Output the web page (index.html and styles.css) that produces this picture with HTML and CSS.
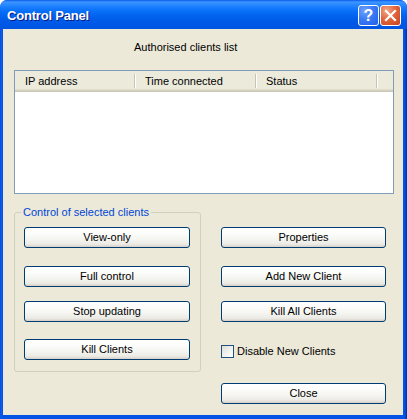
FILE: index.html
```html
<!DOCTYPE html>
<html>
<head>
<meta charset="utf-8">
<link rel="stylesheet" href="styles.css">
</head>
<body>
<div class="window">
  <div class="titlebar">
    <span class="title">Control Panel</span>
    <div class="caption-btns">
      <span class="cbtn help">?</span>
      <span class="cbtn close"><svg width="13" height="13" viewBox="0 0 13 13"><path d="M2 2 L11 11 M11 2 L2 11" stroke="#fff" stroke-width="2.2" stroke-linecap="square"/></svg></span>
    </div>
  </div>
  <div class="client">
    <div class="caption">Authorised clients list</div>
    <div class="listview">
      <div class="lv-header">
        <span class="lv-col first">IP address</span><span class="lv-div"></span>
        <span class="lv-col">Time connected</span><span class="lv-div"></span>
        <span class="lv-col">Status</span><span class="lv-div"></span>
      </div>
    </div>
    <div class="bottom">
      <fieldset class="group">
        <legend>Control of selected clients</legend>
        <button class="btn">View-only</button>
        <button class="btn gap-18">Full control</button>
        <button class="btn gap-14">Stop updating</button>
        <button class="btn gap-17">Kill Clients</button>
      </fieldset>
      <div class="side">
        <button class="btn">Properties</button>
        <button class="btn gap-18">Add New Client</button>
        <button class="btn gap-14">Kill All Clients</button>
        <label class="check"><span class="box"></span>Disable New Clients</label>
        <button class="btn close-btn">Close</button>
      </div>
    </div>
  </div>
</div>
</body>
</html>
```

FILE: styles.css
```css
html, body {
  margin: 0;
  padding: 0;
  background: #ffffff;
}

.window {
  width: 407px;
  height: 419px;
  display: flex;
  flex-direction: column;
  background: linear-gradient(to right, #0831D9 0, #166AEE 1px, #0055E5 2px, #0055E5 404px, #0044CC 406px, #001EA0 407px);
  border-radius: 7px 7px 0 0;
  font-family: "Liberation Sans", Arial, sans-serif;
  font-size: 11px;
  color: #000;
  overflow: hidden;
}

.titlebar {
  height: 29px;
  flex: none;
  display: flex;
  align-items: center;
  justify-content: space-between;
  padding: 0 6px 0 7px;
  background: linear-gradient(to bottom, #0A5BEA 0, #3D95FF 2px, #2E8CFF 4px, #1A7EFF 7px, #0870F8 11px, #0263EE 16px, #005AE8 21px, #0057E5 25px, #0054E0 29px);
  border-radius: 7px 7px 0 0;
}

.title {
  color: #fff;
  font-family: "Liberation Sans", Arial, sans-serif;
  font-weight: bold;
  font-size: 13px;
  letter-spacing: -0.2px;
  text-shadow: 1px 1px 0 #0A1883;
  margin-top: 1px;
}

.caption-btns {
  display: flex;
  gap: 1px;
  margin-top: 2px;
}

.cbtn {
  width: 21px;
  height: 21px;
  box-sizing: border-box;
  border: 1px solid #fff;
  border-radius: 3px;
  display: flex;
  align-items: center;
  justify-content: center;
}

.help {
  background: radial-gradient(circle at 30% 25%, #6FA2FF 0, #3D7BF5 45%, #1F5FE8 100%);
  color: #fff;
  font-weight: bold;
  font-size: 16px;
  font-family: "Liberation Sans", Arial, sans-serif;
  line-height: 19px;
}

.close {
  background: radial-gradient(circle at 30% 25%, #F2A88A 0, #E2663C 45%, #C9421D 100%);
}

.client {
  flex: 1;
  margin: 0 4px 4px 3px;
  background: #ECE9D8;
  padding: 0 9px 0 11px;
  display: flex;
  flex-direction: column;
}

.caption {
  margin-top: 12px;
  padding-left: 120px;
  line-height: 13px;
  height: 13px;
}

.listview {
  margin-top: 16px;
  height: 124px;
  box-sizing: border-box;
  border: 1px solid #7F9DB9;
  background: #fff;
}

.lv-header {
  height: 21px;
  display: flex;
  align-items: center;
  background: #EBEADB;
  box-shadow: inset 0 -1px #CBC7B8, inset 0 -2px #D6D2C2, inset 0 -3px #E2DEC9;
}

.lv-col {
  width: 110px;
  padding-left: 9px;
  line-height: 16px;
  margin-bottom: 1px;
  white-space: nowrap;
}

.lv-col.first {
  width: 109px;
  padding-left: 10px;
}

.lv-div {
  width: 0;
  height: 14px;
  border-left: 1px solid #C7C5B2;
  border-right: 1px solid #fff;
  margin-bottom: 1px;
}

.bottom {
  margin-top: 12px;
  display: flex;
  align-items: flex-start;
}

.group {
  margin: 0;
  width: 186px;
  box-sizing: border-box;
  border: 1px solid #D0D0BF;
  border-radius: 3px;
  padding: 8px 10px 11px 9px;
}

.group legend {
  color: #0046D5;
  padding: 0 2px;
  margin-left: -3px;
  line-height: 13px;
}

.btn {
  display: block;
  width: 166px;
  height: 21px;
  box-sizing: border-box;
  margin: 0;
  padding: 0;
  border: 1px solid #003C74;
  border-radius: 3px;
  background: linear-gradient(to bottom, #FFFFFF 0, #FCFCFB 30%, #F4F4F0 60%, #ECEBE6 85%, #D6D0C5 100%);
  font-family: "Liberation Sans", Arial, sans-serif;
  font-size: 11px;
  color: #000;
  text-align: center;
  line-height: 19px;
}

.gap-18 { margin-top: 18px; }
.gap-14 { margin-top: 14px; }
.gap-17 { margin-top: 17px; }

.side {
  margin-left: 20px;
  margin-top: 21px;
  width: 165px;
  display: flex;
  flex-direction: column;
}

.side .btn {
  width: 165px;
}

.check {
  margin-top: 23px;
  display: flex;
  align-items: center;
  gap: 3px;
  line-height: 13px;
  height: 13px;
}

.box {
  width: 13px;
  height: 13px;
  box-sizing: border-box;
  border: 1px solid #1C5180;
  background: linear-gradient(135deg, #DCDCD7 0, #F0F0EC 50%, #FFFFFF 100%);
}

.close-btn {
  margin-top: 25px;
}
```
